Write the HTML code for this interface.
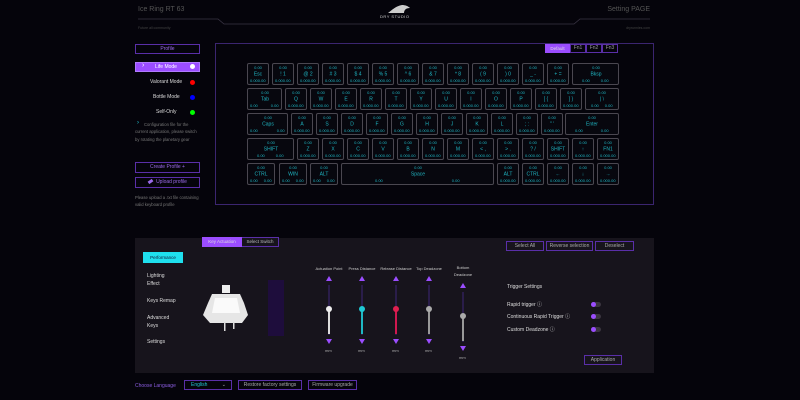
<!DOCTYPE html>
<html><head><meta charset="utf-8"><style>
*{margin:0;padding:0;box-sizing:border-box}
body{width:800px;height:400px;background:#05040b;font-family:"Liberation Sans",sans-serif;color:#ddd;position:relative;overflow:hidden}
.a{position:absolute}
.t{position:absolute;white-space:nowrap}
.k{position:absolute;height:22px;border:1px solid #4a4750;border-radius:2px;color:#1fb5c2;background:#07070e}
.k i,.k b,.k s,.k u{position:absolute;font-style:normal;font-weight:normal;text-decoration:none;white-space:nowrap;font-size:8px;line-height:8px}
.k i{top:2px;left:50%;transform:translateX(-50%) scale(.5);transform-origin:center top}
.k b{top:8px;left:50%;font-size:10px;line-height:10px;transform:translateX(-50%) scale(.5);transform-origin:center top}
.k s{bottom:1px;left:2px;transform:scale(.5);transform-origin:left bottom}
.k u{bottom:1px;right:2px;transform:scale(.5);transform-origin:right bottom}
.r1{top:63px}.r2{top:88px}.r3{top:113px}.r4{top:138px}.r5{top:163px}
.btn{position:absolute;border:1px solid #5a2fa8;color:#9b6be8;font-size:5px;text-align:center}
.side{font-size:5px;color:#ddd}
.dot{position:absolute;width:5px;height:5px;border-radius:50%}
.sl{position:absolute;width:2px;background:#2a1d4a}
.tri{position:absolute;width:0;height:0;border-left:3px solid transparent;border-right:3px solid transparent}
.up{border-bottom:5px solid #9b4dff}.dn{border-top:5px solid #9b4dff}
.h{position:absolute;width:6px;height:6px;border-radius:50%}
.tg{position:absolute;width:10px;height:5px;border-radius:3px;background:#3b3640}
.tg:after{content:"";position:absolute;left:0;top:0;width:5px;height:5px;border-radius:50%;background:#9b4dff}
.lbl{position:absolute;font-size:4px;color:#ccc;text-align:center;width:40px}
</style></head><body>
<div class="t" style="left:138px;top:6px;font-size:7px;color:#555">Ice Ring RT 63</div>
<div class="t" style="left:138px;top:26px;font-size:3.5px;color:#444">Future all community</div>
<div class="t" style="right:150px;top:6px;font-size:7px;color:#555">Setting PAGE</div>
<div class="t" style="right:150px;top:26px;font-size:3.5px;color:#444">dryrunnies.com</div>
<svg class="a" style="left:0;top:0" width="800" height="30"><polyline points="138,19 218,19 224,24 574,24 580,19 650,19" fill="none" stroke="#3a3545" stroke-width="0.8"/>
<path d="M388,13 C392,10 396,6 402,5 C405,5 408,6 410,8 C406,8 404,10 404,13 Z" fill="#ccc"/></svg>
<div class="t" style="left:380px;top:14px;font-size:4px;color:#ccc;letter-spacing:.5px">DRY STUDIO</div>

<div class="btn" style="left:135px;top:44px;width:65px;height:10px;line-height:8px">Profile</div>
<div class="a" style="left:135px;top:62px;width:65px;height:10px;background:#9b4dff;border:1px solid #b07bff"></div>
<div class="t" style="left:142px;top:62px;font-size:7px;color:#fff">›</div>
<div class="t side" style="left:155px;top:64px;color:#fff">Life Mode</div>
<div class="dot" style="left:190px;top:64px;background:#fff"></div>
<div class="t side" style="left:150px;top:79px">Valorant Mode</div><div class="dot" style="left:190px;top:80px;background:#f00"></div>
<div class="t side" style="left:153px;top:94px">Bottle Mode</div><div class="dot" style="left:190px;top:95px;background:#00f"></div>
<div class="t side" style="left:156px;top:109px">Self-Only</div><div class="dot" style="left:190px;top:110px;background:#0f0"></div>
<div class="t" style="left:137px;top:120px;font-size:6px;color:#22c9d6">›</div>
<div class="a" style="left:135px;top:121px;width:66px;font-size:4.2px;line-height:7.4px;color:#777;text-indent:9px">Configuration file for the current application, please switch by rotating the planetary gear</div>
<div class="btn" style="left:135px;top:162px;width:65px;height:11px;line-height:9px">Create Profile +</div>
<div class="btn" style="left:135px;top:177px;width:65px;height:11px;line-height:9px"><span style="display:inline-block;width:5px;height:3px;background:#9b6be8;transform:rotate(-35deg);margin-right:3px"></span>Upload profile</div>
<div class="a" style="left:135px;top:194px;width:66px;font-size:4.2px;line-height:7.4px;color:#777">Please upload a .txt file containing valid keyboard profile</div>

<div class="a" style="left:215px;top:43px;width:439px;height:162px;border:1px solid #3b2570"></div>
<div class="a" style="left:545px;top:44px;width:25px;height:9px;background:#9b4dff;font-size:4.5px;color:#ddd;text-align:center;line-height:9px">Default</div>
<div class="btn" style="left:570px;top:44px;width:16px;height:9px;line-height:7px;color:#999">Fn1</div>
<div class="btn" style="left:586px;top:44px;width:16px;height:9px;line-height:7px;color:#999">Fn2</div>
<div class="btn" style="left:602px;top:44px;width:16px;height:9px;line-height:7px;color:#999">Fn3</div>

<div class="k r1" style="left:247px;width:22px"><i>0.00</i><b>Esc</b><s>0.00</s><u>0.00</u></div>
<div class="k r1" style="left:272px;width:22px"><i>0.00</i><b>! 1</b><s>0.00</s><u>0.00</u></div>
<div class="k r1" style="left:297px;width:22px"><i>0.00</i><b>@ 2</b><s>0.00</s><u>0.00</u></div>
<div class="k r1" style="left:322px;width:22px"><i>0.00</i><b># 3</b><s>0.00</s><u>0.00</u></div>
<div class="k r1" style="left:347px;width:22px"><i>0.00</i><b>$ 4</b><s>0.00</s><u>0.00</u></div>
<div class="k r1" style="left:372px;width:22px"><i>0.00</i><b>% 5</b><s>0.00</s><u>0.00</u></div>
<div class="k r1" style="left:397px;width:22px"><i>0.00</i><b>^ 6</b><s>0.00</s><u>0.00</u></div>
<div class="k r1" style="left:422px;width:22px"><i>0.00</i><b>& 7</b><s>0.00</s><u>0.00</u></div>
<div class="k r1" style="left:447px;width:22px"><i>0.00</i><b>* 8</b><s>0.00</s><u>0.00</u></div>
<div class="k r1" style="left:472px;width:22px"><i>0.00</i><b>( 9</b><s>0.00</s><u>0.00</u></div>
<div class="k r1" style="left:497px;width:22px"><i>0.00</i><b>) 0</b><s>0.00</s><u>0.00</u></div>
<div class="k r1" style="left:522px;width:22px"><i>0.00</i><b>_ -</b><s>0.00</s><u>0.00</u></div>
<div class="k r1" style="left:547px;width:22px"><i>0.00</i><b>+ =</b><s>0.00</s><u>0.00</u></div>
<div class="k r1" style="left:572px;width:47px"><i>0.00</i><b>Bksp</b><s style="left:9px">0.00</s><u style="right:9px">0.00</u></div>
<div class="k r2" style="left:247px;width:35px"><i>0.00</i><b>Tab</b><s>0.00</s><u>0.00</u></div>
<div class="k r2" style="left:285px;width:22px"><i>0.00</i><b>Q</b><s>0.00</s><u>0.00</u></div>
<div class="k r2" style="left:310px;width:22px"><i>0.00</i><b>W</b><s>0.00</s><u>0.00</u></div>
<div class="k r2" style="left:335px;width:22px"><i>0.00</i><b>E</b><s>0.00</s><u>0.00</u></div>
<div class="k r2" style="left:360px;width:22px"><i>0.00</i><b>R</b><s>0.00</s><u>0.00</u></div>
<div class="k r2" style="left:385px;width:22px"><i>0.00</i><b>T</b><s>0.00</s><u>0.00</u></div>
<div class="k r2" style="left:410px;width:22px"><i>0.00</i><b>Y</b><s>0.00</s><u>0.00</u></div>
<div class="k r2" style="left:435px;width:22px"><i>0.00</i><b>U</b><s>0.00</s><u>0.00</u></div>
<div class="k r2" style="left:460px;width:22px"><i>0.00</i><b>I</b><s>0.00</s><u>0.00</u></div>
<div class="k r2" style="left:485px;width:22px"><i>0.00</i><b>O</b><s>0.00</s><u>0.00</u></div>
<div class="k r2" style="left:510px;width:22px"><i>0.00</i><b>P</b><s>0.00</s><u>0.00</u></div>
<div class="k r2" style="left:535px;width:22px"><i>0.00</i><b>[ {</b><s>0.00</s><u>0.00</u></div>
<div class="k r2" style="left:560px;width:22px"><i>0.00</i><b>] }</b><s>0.00</s><u>0.00</u></div>
<div class="k r2" style="left:585px;width:34px"><i>0.00</i><b>| \</b><s style="left:5px">0.00</s><u style="right:5px">0.00</u></div>
<div class="k r3" style="left:247px;width:41px"><i>0.00</i><b>Caps</b><s>0.00</s><u>0.00</u></div>
<div class="k r3" style="left:291px;width:22px"><i>0.00</i><b>A</b><s>0.00</s><u>0.00</u></div>
<div class="k r3" style="left:316px;width:22px"><i>0.00</i><b>S</b><s>0.00</s><u>0.00</u></div>
<div class="k r3" style="left:341px;width:22px"><i>0.00</i><b>D</b><s>0.00</s><u>0.00</u></div>
<div class="k r3" style="left:366px;width:22px"><i>0.00</i><b>F</b><s>0.00</s><u>0.00</u></div>
<div class="k r3" style="left:391px;width:22px"><i>0.00</i><b>G</b><s>0.00</s><u>0.00</u></div>
<div class="k r3" style="left:416px;width:22px"><i>0.00</i><b>H</b><s>0.00</s><u>0.00</u></div>
<div class="k r3" style="left:441px;width:22px"><i>0.00</i><b>J</b><s>0.00</s><u>0.00</u></div>
<div class="k r3" style="left:466px;width:22px"><i>0.00</i><b>K</b><s>0.00</s><u>0.00</u></div>
<div class="k r3" style="left:491px;width:22px"><i>0.00</i><b>L</b><s>0.00</s><u>0.00</u></div>
<div class="k r3" style="left:516px;width:22px"><i>0.00</i><b>; :</b><s>0.00</s><u>0.00</u></div>
<div class="k r3" style="left:541px;width:22px"><i>0.00</i><b>" '</b><s>0.00</s><u>0.00</u></div>
<div class="k r3" style="left:565px;width:54px"><i>0.00</i><b>Enter</b><s style="left:9px">0.00</s><u style="right:9px">0.00</u></div>
<div class="k r4" style="left:247px;width:47px"><i>0.00</i><b>SHIFT</b><s style="left:9px">0.00</s><u style="right:9px">0.00</u></div>
<div class="k r4" style="left:297px;width:22px"><i>0.00</i><b>Z</b><s>0.00</s><u>0.00</u></div>
<div class="k r4" style="left:322px;width:22px"><i>0.00</i><b>X</b><s>0.00</s><u>0.00</u></div>
<div class="k r4" style="left:347px;width:22px"><i>0.00</i><b>C</b><s>0.00</s><u>0.00</u></div>
<div class="k r4" style="left:372px;width:22px"><i>0.00</i><b>V</b><s>0.00</s><u>0.00</u></div>
<div class="k r4" style="left:397px;width:22px"><i>0.00</i><b>B</b><s>0.00</s><u>0.00</u></div>
<div class="k r4" style="left:422px;width:22px"><i>0.00</i><b>N</b><s>0.00</s><u>0.00</u></div>
<div class="k r4" style="left:447px;width:22px"><i>0.00</i><b>M</b><s>0.00</s><u>0.00</u></div>
<div class="k r4" style="left:472px;width:22px"><i>0.00</i><b>&lt; ,</b><s>0.00</s><u>0.00</u></div>
<div class="k r4" style="left:497px;width:22px"><i>0.00</i><b>&gt; .</b><s>0.00</s><u>0.00</u></div>
<div class="k r4" style="left:522px;width:22px"><i>0.00</i><b>? /</b><s>0.00</s><u>0.00</u></div>
<div class="k r4" style="left:547px;width:22px"><i>0.00</i><b>SHIFT</b><s>0.00</s><u>0.00</u></div>
<div class="k r4" style="left:572px;width:22px"><i>0.00</i><b>↑</b><s>0.00</s><u>0.00</u></div>
<div class="k r4" style="left:597px;width:22px"><i>0.00</i><b>FN1</b><s>0.00</s><u>0.00</u></div>
<div class="k r5" style="left:247px;width:28px"><i>0.00</i><b>CTRL</b><s>0.00</s><u>0.00</u></div>
<div class="k r5" style="left:279px;width:28px"><i>0.00</i><b>WIN</b><s>0.00</s><u>0.00</u></div>
<div class="k r5" style="left:310px;width:28px"><i>0.00</i><b>ALT</b><s>0.00</s><u>0.00</u></div>
<div class="k r5" style="left:341px;width:153px"><i>0.00</i><b>Space</b><s style="left:33px">0.00</s><u style="right:33px">0.00</u></div>
<div class="k r5" style="left:497px;width:22px"><i>0.00</i><b>ALT</b><s>0.00</s><u>0.00</u></div>
<div class="k r5" style="left:522px;width:22px"><i>0.00</i><b>CTRL</b><s>0.00</s><u>0.00</u></div>
<div class="k r5" style="left:547px;width:22px"><i>0.00</i><b>←</b><s>0.00</s><u>0.00</u></div>
<div class="k r5" style="left:572px;width:22px"><i>0.00</i><b>↓</b><s>0.00</s><u>0.00</u></div>
<div class="k r5" style="left:597px;width:22px"><i>0.00</i><b>→</b><s>0.00</s><u>0.00</u></div>

<div class="a" style="left:135px;top:238px;width:519px;height:135px;background:#17141c"></div>
<div class="a" style="left:202px;top:237px;width:40px;height:10px;background:#9b4dff;font-size:4.5px;color:#ddd;text-align:center;line-height:10px">Key Actuation</div>
<div class="a" style="left:242px;top:237px;width:37px;height:10px;border:1px solid #5a2fa8;border-left:none;font-size:4.5px;color:#bbb;text-align:center;line-height:8px">Select Switch</div>
<div class="a" style="left:143px;top:252px;width:40px;height:11px;background:#1fe0ee;font-size:4.5px;color:#113;text-align:center;line-height:11px">Performance</div>
<div class="t side" style="left:147px;top:272px;line-height:8px">Lighting<br>Effect</div>
<div class="t side" style="left:147px;top:298px">Keys Remap</div>
<div class="t side" style="left:147px;top:314px;line-height:8px">Advanced<br>Keys</div>
<div class="t side" style="left:147px;top:339px">Settings</div>
<svg class="a" style="left:200px;top:285px" width="52" height="48"><path d="M22,0 L30,0 L30,8 L22,8Z" fill="#eee"/><path d="M12,9 L40,9 L44,18 L48,30 L42,38 L10,38 L3,30 L8,18 Z" fill="#e6e6e6"/><path d="M15,13 L37,13 L40,28 L12,28 Z" fill="#fafafa"/><rect x="24" y="37" width="1.5" height="9" fill="#ddd"/><rect x="33" y="37" width="1.5" height="7" fill="#ddd"/></svg>
<div class="a" style="left:268px;top:280px;width:16px;height:56px;background:#1e0d3c"></div>

<div class="lbl" style="left:309px;top:266px">Actuation Point</div>
<div class="lbl" style="left:342px;top:266px">Press Distance</div>
<div class="lbl" style="left:376px;top:266px">Release Distance</div>
<div class="lbl" style="left:409px;top:266px">Top Deadzone</div>
<div class="lbl" style="left:443px;top:264px;line-height:7px">Bottom<br>Deadzone</div>

<div class="tri up" style="left:326px;top:276px"></div><div class="sl" style="left:328px;top:285px;height:50px"></div><div class="a" style="left:328px;top:309px;width:2px;height:25px;background:#ddd"></div><div class="h" style="left:326px;top:306px;background:#eee"></div><div class="tri dn" style="left:326px;top:339px"></div><div class="t" style="left:325px;top:348px;font-size:4px;color:#aaa">mm</div>
<div class="tri up" style="left:359px;top:276px"></div><div class="sl" style="left:361px;top:285px;height:50px"></div><div class="a" style="left:361px;top:309px;width:2px;height:25px;background:#1fb8c4"></div><div class="h" style="left:359px;top:306px;background:#1fc8d4"></div><div class="tri dn" style="left:359px;top:339px"></div><div class="t" style="left:358px;top:348px;font-size:4px;color:#aaa">mm</div>
<div class="tri up" style="left:393px;top:276px"></div><div class="sl" style="left:395px;top:285px;height:50px"></div><div class="a" style="left:395px;top:309px;width:2px;height:25px;background:#d01850"></div><div class="h" style="left:393px;top:306px;background:#e02050"></div><div class="tri dn" style="left:393px;top:339px"></div><div class="t" style="left:392px;top:348px;font-size:4px;color:#aaa">mm</div>
<div class="tri up" style="left:426px;top:276px"></div><div class="sl" style="left:428px;top:285px;height:50px"></div><div class="a" style="left:428px;top:309px;width:2px;height:25px;background:#999"></div><div class="h" style="left:426px;top:306px;background:#aaa"></div><div class="tri dn" style="left:426px;top:339px"></div><div class="t" style="left:425px;top:348px;font-size:4px;color:#aaa">mm</div>
<div class="tri up" style="left:460px;top:283px"></div><div class="sl" style="left:462px;top:292px;height:50px"></div><div class="a" style="left:462px;top:316px;width:2px;height:25px;background:#999"></div><div class="h" style="left:460px;top:313px;background:#aaa"></div><div class="tri dn" style="left:460px;top:346px"></div><div class="t" style="left:459px;top:355px;font-size:4px;color:#aaa">mm</div>

<div class="btn" style="left:506px;top:241px;width:38px;height:10px;line-height:8px;color:#aaa">Select All</div>
<div class="btn" style="left:546px;top:241px;width:47px;height:10px;line-height:8px;color:#aaa">Reverse selection</div>
<div class="btn" style="left:595px;top:241px;width:39px;height:10px;line-height:8px;color:#aaa">Deselect</div>
<div class="t side" style="left:507px;top:284px">Trigger Settings</div>
<div class="t side" style="left:507px;top:301px">Rapid trigger ⓘ</div>
<div class="t side" style="left:507px;top:313px">Continuous Rapid Trigger ⓘ</div>
<div class="t side" style="left:507px;top:326px">Custom Deadzone ⓘ</div>
<div class="tg" style="left:591px;top:302px"></div>
<div class="tg" style="left:591px;top:314px"></div>
<div class="tg" style="left:591px;top:327px"></div>
<div class="btn" style="left:584px;top:355px;width:38px;height:10px;line-height:8px;color:#aaa">Application</div>

<div class="t" style="left:135px;top:383px;font-size:5px;color:#8b5de0">Choose Language</div>
<div class="btn" style="left:184px;top:380px;width:48px;height:10px;line-height:8px;text-align:left;padding-left:6px;color:#22c9d6">English<span style="position:absolute;right:5px;color:#aaa">⌄</span></div>
<div class="btn" style="left:238px;top:380px;width:64px;height:10px;line-height:8px;color:#aaa">Restore factory settings</div>
<div class="btn" style="left:308px;top:380px;width:49px;height:10px;line-height:8px;color:#aaa">Firmware upgrade</div>
</body></html>
